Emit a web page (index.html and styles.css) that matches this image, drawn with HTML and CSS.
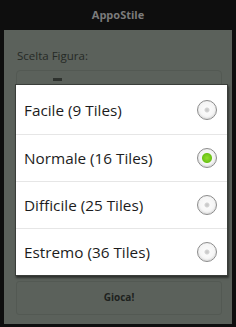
FILE: index.html
```html
<!DOCTYPE html>
<html lang="it">
<head>
    <meta charset="UTF-8">
    <title>AppoStile</title>
    <link rel="stylesheet" href="styles.css">
</head>
<body>

<!-- Title bar -->
<div class="title-bar">AppoStile</div>

<!-- Main screen (dimmed behind the dialog) -->
<div class="screen">
    <div class="label">Scelta Figura:</div>
    <div class="spinner"><span class="spinner-tab"></span></div>
    <div class="button">Gioca!</div>
</div>

<!-- Difficulty dialog -->
<div class="dialog">
    <div class="option">
        <span>Facile (9 Tiles)</span>
        <span class="radio"></span>
    </div>
    <div class="option">
        <span>Normale (16 Tiles)</span>
        <span class="radio checked"></span>
    </div>
    <div class="option">
        <span>Difficile (25 Tiles)</span>
        <span class="radio"></span>
    </div>
    <div class="option">
        <span>Estremo (36 Tiles)</span>
        <span class="radio"></span>
    </div>
</div>

</body>
</html>
```

FILE: styles.css
```css
body {
    margin: 0;
    padding: 0;
    background: #0e0e0e;
    font-family: "Open Sans", "DejaVu Sans", sans-serif;
    width: 236px;
    height: 327px;
    overflow: hidden;
    position: relative;
}

/* Title Bar */
.title-bar {
    height: 30px;
    line-height: 29px;
    text-align: center;
    color: #7b7b7b;
    font-weight: bold;
    font-size: 11px;
}

/* Dimmed screen */
.screen {
    margin: 0 4px;
    height: 294px;
    background: #5b615b;
    box-sizing: border-box;
    padding: 19px 10px 0 12px;
    display: flex;
    flex-direction: column;
}

.label {
    color: #262a26;
    font-size: 11.5px;
    line-height: 14px;
    padding-left: 1px;
}

.spinner {
    margin-top: 7px;
    height: 40px;
    border: 1px solid #535953;
    border-radius: 4px;
    position: relative;
}

.spinner-tab {
    position: absolute;
    left: 36px;
    top: 7px;
    width: 9px;
    height: 3px;
    background: #2e322e;
}

.button {
    margin-top: auto;
    margin-bottom: 9px;
    height: 32px;
    line-height: 31px;
    text-align: center;
    border: 1px solid #535953;
    border-radius: 3px;
    color: #1e221e;
    font-weight: bold;
    font-size: 10px;
}

/* Dialog */
.dialog {
    position: absolute;
    left: 15px;
    top: 84px;
    width: 211px;
    background: #fff;
    border: 1px solid #3a3e3a;
    box-shadow: 1px 2px 2px rgba(0, 0, 0, 0.5);
}

.option {
    height: 47px;
    display: flex;
    align-items: center;
    justify-content: space-between;
    padding: 0 10px 0 8px;
    color: #1c1c1c;
    font-size: 15.3px;
    border-top: 1px solid #e6e6e6;
    box-sizing: border-box;
}

.option:first-child {
    border-top: none;
    height: 49px;
}

.radio {
    width: 18px;
    height: 18px;
    border: 1px solid #8c8c8c;
    border-radius: 50%;
    background: radial-gradient(circle, #c4c4c4 0, #d4d4d4 2px, #fafafa 3px, #f0f0f0 100%);
    box-shadow: inset 0 -1px 2px rgba(0, 0, 0, 0.12);
}

.radio.checked {
    background: radial-gradient(circle, #92de2c 0, #6cc317 4.5px, #f6f6f6 5.5px, #eeeeee 100%);
}
```
